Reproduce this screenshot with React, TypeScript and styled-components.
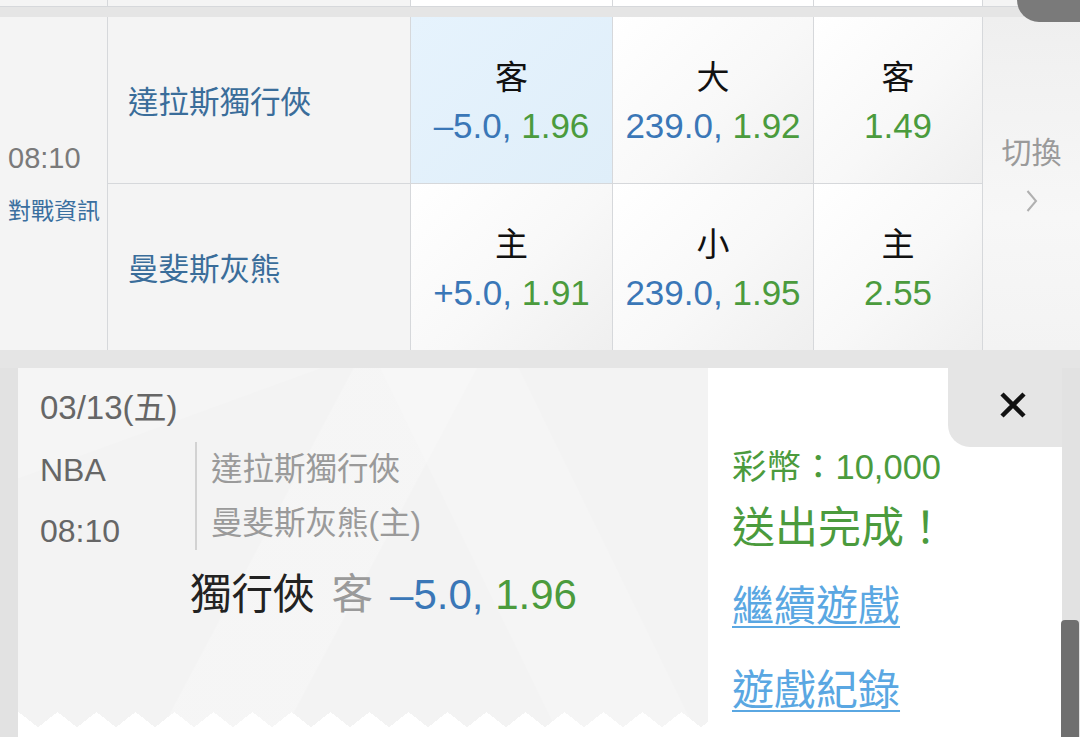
import styled, { createGlobalStyle } from 'styled-components';

const GlobalStyle = createGlobalStyle`
  html, body {
    margin: 0;
    padding: 0;
  }
  body {
    width: 1080px;
    height: 737px;
    overflow: hidden;
    background: #e5e5e5;
    font-family: "Liberation Sans", "Noto Sans CJK TC", sans-serif;
  }
`;

interface Odds {
  side: string,
  line?: string,
  price: string,
  active?: boolean,
}

interface TeamRow {
  team: string,
  odds: Odds[],
}

const rows: TeamRow[] = [
  {
    team: '達拉斯獨行俠',
    odds: [
      { side: '客', line: '–5.0', price: '1.96', active: true },
      { side: '大', line: '239.0', price: '1.92' },
      { side: '客', price: '1.49' },
    ],
  },
  {
    team: '曼斐斯灰熊',
    odds: [
      { side: '主', line: '+5.0', price: '1.91' },
      { side: '小', line: '239.0', price: '1.95' },
      { side: '主', price: '2.55' },
    ],
  },
];

const columns = '107px 302px 201px 200px 168px 1fr';

export default function App() {
  return (
    <Page>
      <GlobalStyle />
      <CornerBlob />

      <PrevRow>
        <PrevCell $grey />
        <PrevCell $grey />
        <PrevCell />
        <PrevCell />
        <PrevCell />
        <PrevCell $grey />
      </PrevRow>

      <Board>
        <TimeCell>
          <Time>08:10</Time>
          <InfoLink>對戰資訊</InfoLink>
        </TimeCell>
        {rows.map((row, i) => [
          <TeamCell key={`t${i}`}>{row.team}</TeamCell>,
          ...row.odds.map((o, j) => (
            <OddsCell key={`o${i}${j}`} $active={o.active}>
              <Side>{o.side}</Side>
              <Line>
                {o.line && <Blue>{o.line}, </Blue>}
                <Green>{o.price}</Green>
              </Line>
            </OddsCell>
          )),
          i === 0 ? (
            <SwitchCell key="switch">
              <SwitchText>切換</SwitchText>
              <svg width="12" height="24" viewBox="0 0 12 24">
                <polyline points="1.5,2 10,12 1.5,22" fill="none" stroke="#b0b0b0" strokeWidth="2" />
              </svg>
            </SwitchCell>
          ) : null,
        ])}
      </Board>

      <Lower>
        <Gutter />
        <Sheet>
          <Ticket>
            <DateText>03/13(五)</DateText>
            <InfoRow>
              <MetaCol>
                <Meta>NBA</Meta>
                <Meta $gap>08:10</Meta>
              </MetaCol>
              <TeamsCol>
                <TeamLine>達拉斯獨行俠</TeamLine>
                <TeamLine>曼斐斯灰熊(主)</TeamLine>
              </TeamsCol>
            </InfoRow>
            <BetLine>
              <BetTeam>獨行俠</BetTeam>
              <BetSide>客</BetSide>
              <BetOdds>
                <Blue>–5.0, </Blue>
                <Green>1.96</Green>
              </BetOdds>
            </BetLine>
          </Ticket>

          <Result>
            <CloseBox>
              <svg width="30" height="30" viewBox="0 0 30 30">
                <path d="M4 4 L26 26 M26 4 L4 26" stroke="#111" strokeWidth="4.5" />
              </svg>
            </CloseBox>
            <ResultBody>
              <Coins>彩幣：10,000</Coins>
              <Done>送出完成！</Done>
              <ActionLink href="#" $top={27}>繼續遊戲</ActionLink>
              <ActionLink href="#" $top={32}>遊戲紀錄</ActionLink>
            </ResultBody>
          </Result>
        </Sheet>
        <ScrollGutter>
          <Thumb />
        </ScrollGutter>
      </Lower>
    </Page>
  );
}

const Page = styled.div`
  position: relative;
  width: 1080px;
  height: 737px;
  overflow: hidden;
`

const CornerBlob = styled.div`
  position: absolute;
  top: 0;
  right: 0;
  width: 63px;
  height: 22px;
  background: #7a7a7a;
  border-bottom-left-radius: 24px;
  z-index: 2;
`

const PrevRow = styled.div`
  display: grid;
  grid-template-columns: ${columns};
  column-gap: 1px;
  height: 6px;
  background: #d6d8db;
  border-bottom: 1px solid #d6d8db;
  margin-bottom: 10px;
`

const PrevCell = styled.div<{ $grey?: boolean }>`
  background: ${({ $grey }) => ($grey ? '#f4f4f4' : '#ffffff')};
`

const Board = styled.div`
  display: grid;
  grid-template-columns: ${columns};
  grid-template-rows: 166px 166px;
  gap: 1px;
  background: #d6d8db;
`

const TimeCell = styled.div`
  grid-row: span 2;
  display: flex;
  flex-direction: column;
  justify-content: center;
  padding-left: 8px;
  background: #f4f4f4;
`

const Time = styled.div`
  font-size: 29px;
  line-height: 34px;
  color: #7a7a7a;
`

const InfoLink = styled.div`
  margin-top: 21px;
  font-size: 23px;
  line-height: 30px;
  color: #3a6f9f;
  white-space: nowrap;
`

const TeamCell = styled.div`
  display: flex;
  align-items: center;
  padding-left: 20px;
  background: #f4f4f4;
  font-size: 30.5px;
  color: #3a6d9a;
`

const OddsCell = styled.div<{ $active?: boolean }>`
  display: flex;
  flex-direction: column;
  align-items: center;
  justify-content: center;
  padding-top: 4px;
  background: ${({ $active }) => ($active
    ? 'linear-gradient(135deg, #e6f3fd 0%, #dfeef9 100%)'
    : 'linear-gradient(135deg, #ffffff 0%, #f8f8f8 55%, #efefef 100%)')};
`

const Side = styled.div`
  font-size: 33px;
  line-height: 48px;
  color: #111;
`

const Line = styled.div`
  font-size: 35px;
  line-height: 48px;
  white-space: nowrap;
`

const Blue = styled.span`
  color: #3a77b7;
  white-space: pre;
`

const Green = styled.span`
  color: #4b9b3d;
`

const SwitchCell = styled.div`
  grid-column: 6;
  grid-row: 1 / span 2;
  display: flex;
  flex-direction: column;
  align-items: center;
  justify-content: center;
  gap: 18px;
  padding-bottom: 20px;
  background: linear-gradient(180deg, #efefef 0%, #f7f7f7 60%, #f3f3f3 100%);
`

const SwitchText = styled.div`
  font-size: 30px;
  line-height: 36px;
  color: #9a9a9a;
`

const Lower = styled.div`
  display: flex;
  margin-top: 18px;
  height: 369px;
`

const Gutter = styled.div`
  width: 18px;
  background: #e2e2e2;
`

const Sheet = styled.div`
  flex: 1;
  display: flex;
  background: #ffffff;
`

const Ticket = styled.div`
  width: 690px;
  height: 359px;
  box-sizing: border-box;
  padding: 22px 0 0 22px;
  background:
    conic-gradient(from 128deg at 50% 0, #ffffff 104deg, transparent 0) left 20px bottom 0 / 39px 15px repeat-x,
    linear-gradient(118deg, transparent 0 38%, rgba(255, 255, 255, 0.22) 38.2% 52%, transparent 52.2%),
    linear-gradient(64deg, transparent 0 62%, rgba(255, 255, 255, 0.2) 62.2% 78%, transparent 78.2%),
    linear-gradient(160deg, rgba(255, 255, 255, 0.18) 0 18%, transparent 18.2%),
    #f3f3f3;
`

const DateText = styled.div`
  font-size: 33px;
  line-height: 36px;
  color: #666;
`

const InfoRow = styled.div`
  display: flex;
  align-items: flex-start;
  margin-top: 16px;
`

const MetaCol = styled.div`
  width: 155px;
`

const Meta = styled.div<{ $gap?: boolean }>`
  margin-top: ${({ $gap }) => ($gap ? '5px' : '0')};
  font-size: 32px;
  line-height: 56px;
  color: #666;
`

const TeamsCol = styled.div`
  padding-left: 14px;
  border-left: 2px solid #d2d2d2;
`

const TeamLine = styled.div`
  font-size: 31.5px;
  line-height: 54px;
  color: #9a9a9a;
  white-space: nowrap;
`

const BetLine = styled.div`
  display: flex;
  align-items: baseline;
  gap: 17px;
  margin: 12px 0 0 150px;
  font-size: 41.5px;
  line-height: 48px;
  white-space: nowrap;
`

const BetTeam = styled.span`
  color: #222;
`

const BetSide = styled.span`
  color: #9a9a9a;
`

const BetOdds = styled.span`
  font-size: 42px;
`

const Result = styled.div`
  flex: 1;
  display: flex;
  flex-direction: column;
`

const CloseBox = styled.div`
  align-self: flex-end;
  display: flex;
  align-items: center;
  justify-content: center;
  box-sizing: border-box;
  width: 114px;
  height: 79px;
  padding: 0 0 6px 16px;
  background: #e5e5e5;
  border-bottom-left-radius: 22px;
`

const ResultBody = styled.div`
  display: flex;
  flex-direction: column;
  align-items: flex-start;
  padding-left: 24px;
`

const Coins = styled.div`
  font-size: 34.5px;
  line-height: 40px;
  color: #4b9b3d;
  white-space: nowrap;
`

const Done = styled.div`
  margin-top: 15px;
  font-size: 43px;
  line-height: 52px;
  color: #4b9b3d;
  white-space: nowrap;
`

const ActionLink = styled.a<{ $top: number }>`
  margin-top: ${({ $top }) => $top}px;
  font-size: 42px;
  line-height: 52px;
  color: #5aa7e2;
  text-decoration: underline;
  text-decoration-thickness: 2px;
  text-underline-offset: 5px;
`

const ScrollGutter = styled.div`
  width: 18px;
  display: flex;
  justify-content: center;
  background: #e2e2e2;
`

const Thumb = styled.div`
  width: 7px;
  margin-top: 252px;
  flex: 1;
  margin-bottom: -10px;
  background: #6f6f6f;
  border-radius: 4px;
  transform: translateX(-1px);
`
